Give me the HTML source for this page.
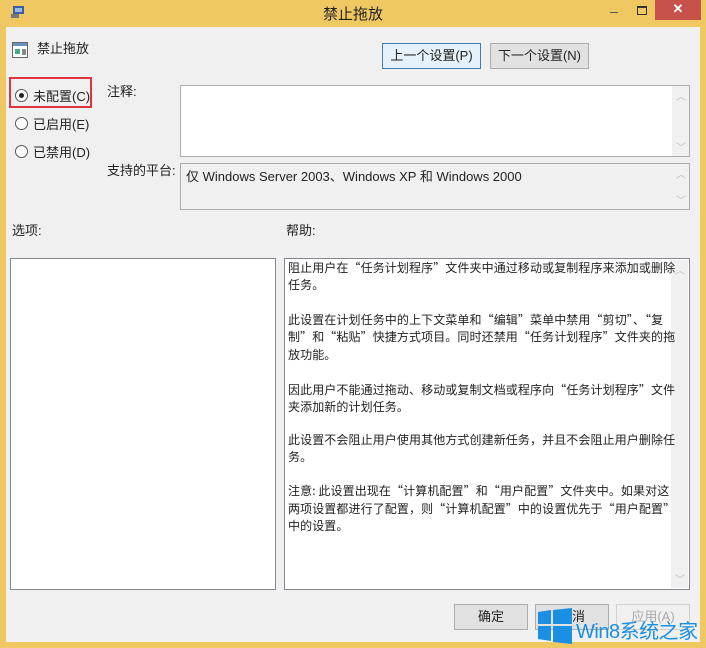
<!DOCTYPE html>
<html><head><meta charset="utf-8"><style>
*{margin:0;padding:0;box-sizing:border-box}
body{width:706px;height:648px;overflow:hidden;background:#f0c862;font-family:"Liberation Sans","Noto Sans CJK SC",sans-serif;font-size:13px;color:#222;position:relative}
.a{position:absolute;white-space:nowrap}
#client{position:absolute;left:6px;top:27px;width:694px;height:615px;background:#f0f0f0}
.btn{position:absolute;background:#e1e1e1;border:1px solid #adadad;text-align:center;line-height:24px;font-size:13px}
.box{position:absolute;background:#fff;border:1px solid #abadb3}
.radio{position:absolute;width:13px;height:13px;border:1px solid #555;border-radius:50%;background:#fff}
.sb{position:absolute;right:0;top:0;bottom:0;width:17px;background:#f0f0f0}
.sb span{position:absolute;left:4px;color:#bbb;font-size:10px}
.hl{position:absolute;left:288px;white-space:nowrap;font-family:"Noto Sans CJK SC",sans-serif;font-size:12px;letter-spacing:0.1px}
</style></head><body>
<div class="a" style="left:10px;top:4px;width:16px;height:16px">
<svg width="16" height="16"><rect x="3" y="2" width="11" height="8" fill="#3a5fa8"/><rect x="1" y="10" width="8" height="4" fill="#777"/><rect x="5" y="4" width="7" height="4" fill="#9bd"/></svg></div>
<div class="a" style="left:0;width:706px;top:3px;text-align:center;font-size:15px;color:#222">禁止拖放</div>
<div class="a" style="left:610px;top:12px;width:8px;height:1px;background:#555"></div>
<div class="a" style="left:637px;top:6px;width:10px;height:9px;border:1px solid #333;border-top-width:2px"></div>
<div class="a" style="left:655px;top:0;width:46px;height:20px;background:#c7504a;color:#fff;text-align:center;font-size:13px;line-height:18px;font-weight:bold">✕</div>
<div id="client"></div>
<div class="a" style="left:12px;top:41px"><svg width="16" height="18"><rect x="0.5" y="1.5" width="15" height="15" fill="#fff" stroke="#666"/><rect x="1" y="2" width="14" height="3" fill="#6b8fbf"/><rect x="3" y="8" width="5" height="5" fill="#4a8"/><rect x="10" y="8" width="4" height="6" fill="#888"/></svg></div>
<div class="a" style="left:37px;top:38px">禁止拖放</div>
<div class="btn" style="left:382px;top:43px;width:99px;height:26px;border-color:#3c7fb1;background:#e5f1fb">上一个设置(P)</div>
<div class="btn" style="left:490px;top:43px;width:99px;height:26px">下一个设置(N)</div>
<div class="a" style="left:9px;top:77px;width:83px;height:31px;border:2px solid #e0343c"></div>
<div class="radio" style="left:15px;top:89px"><div style="position:absolute;left:3px;top:3px;width:5px;height:5px;border-radius:50%;background:#222"></div></div>
<div class="a" style="left:33px;top:86px">未配置(C)</div>
<div class="radio" style="left:15px;top:117px"></div>
<div class="a" style="left:33px;top:114px">已启用(E)</div>
<div class="radio" style="left:15px;top:145px"></div>
<div class="a" style="left:33px;top:142px">已禁用(D)</div>
<div class="a" style="left:107px;top:81px">注释:</div>
<div class="box" style="left:180px;top:85px;width:510px;height:72px"><div class="sb"><span style="top:2px">︿</span><span style="bottom:2px">﹀</span></div></div>
<div class="a" style="left:107px;top:160px">支持的平台:</div>
<div class="box" style="left:180px;top:163px;width:510px;height:47px;background:#f0f0f0"><div class="sb"><span style="top:2px">︿</span><span style="bottom:2px">﹀</span></div>
<div class="a" style="left:5px;top:2px">仅 Windows Server 2003、Windows XP 和 Windows 2000</div></div>
<div class="a" style="left:12px;top:220px">选项:</div>
<div class="a" style="left:286px;top:220px">帮助:</div>
<div class="box" style="left:10px;top:258px;width:266px;height:332px;border-color:#828790"></div>
<div class="box" style="left:284px;top:258px;width:406px;height:332px;border-color:#828790"><div class="sb" style="right:1px;top:1px;bottom:1px"><span style="top:2px">︿</span><span style="bottom:2px">﹀</span></div></div>
<div class="hl" style="top:259px">阻止用户在“任务计划程序”文件夹中通过移动或复制程序来添加或删除</div>
<div class="hl" style="top:276px">任务。</div>
<div class="hl" style="top:311px">此设置在计划任务中的上下文菜单和“编辑”菜单中禁用“剪切”、“复</div>
<div class="hl" style="top:328px">制”和“粘贴”快捷方式项目。同时还禁用“任务计划程序”文件夹的拖</div>
<div class="hl" style="top:346px">放功能。</div>
<div class="hl" style="top:381px">因此用户不能通过拖动、移动或复制文档或程序向“任务计划程序”文件</div>
<div class="hl" style="top:398px">夹添加新的计划任务。</div>
<div class="hl" style="top:431px">此设置不会阻止用户使用其他方式创建新任务，并且不会阻止用户删除任</div>
<div class="hl" style="top:448px">务。</div>
<div class="hl" style="top:482px">注意: 此设置出现在“计算机配置”和“用户配置”文件夹中。如果对这</div>
<div class="hl" style="top:500px">两项设置都进行了配置，则“计算机配置”中的设置优先于“用户配置”</div>
<div class="hl" style="top:517px">中的设置。</div>
<div class="btn" style="left:454px;top:604px;width:74px;height:26px">确定</div>
<div class="btn" style="left:535px;top:604px;width:74px;height:26px">取消</div>
<div class="btn" style="left:616px;top:604px;width:74px;height:26px;color:#aaa;background:#f0f0f0;border-color:#d0d0d0">应用(A)</div>
<svg class="a" style="left:538px;top:608px" width="34" height="36"><polygon points="0,4 13,2 13,16 0,16" fill="#1a8fe3"/><polygon points="15,2 34,0 34,16 15,16" fill="#1a8fe3"/><polygon points="0,18 13,18 13,33 0,31" fill="#1a8fe3"/><polygon points="15,18 34,18 34,36 15,34" fill="#1a8fe3"/></svg>
<div class="a" style="left:576px;top:615px;font-size:20px;color:#1a8fe3;letter-spacing:-0.5px">Win8系统之家</div>
</body></html>
